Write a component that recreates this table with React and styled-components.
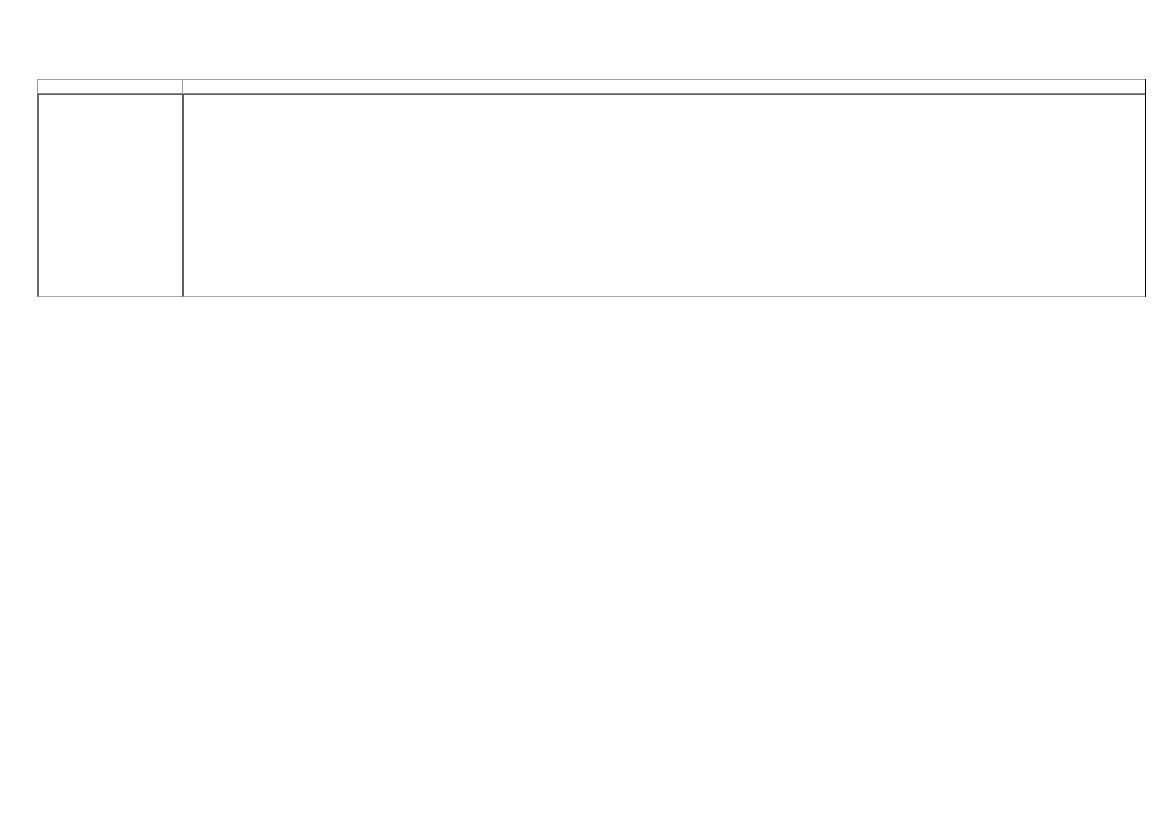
import React from "react";
import styled, { createGlobalStyle } from "styled-components";

const Global = createGlobalStyle`
  html, body { margin: 0; padding: 0; background: #fefefe; }
  body { font-family: "Liberation Sans", Arial, sans-serif; }
`;

const Page = styled.div`
  padding: 79px 23px 0 37px;
  width: 1169px;
  height: 827px;
  box-sizing: border-box;
`;

const Table = styled.div`
  display: grid;
  grid-template-columns: 145px 1fr;
  grid-template-rows: 15px 203px;
  width: 1109px;
  border-right: 1px solid #000;
  box-sizing: border-box;
`;

const HeadCell = styled.div`
  border-top: 1px solid #9c9c9c;
  border-left: 1px solid #9c9c9c;
  border-bottom: 1px solid #8a8a8a;
  box-sizing: border-box;
`;

const BodyCell = styled.div`
  border-top: 1px solid #5e5e5e;
  border-left: 2px solid ${(p) => (p.$first ? "#6a6a6a" : "#5e5e5e")};
  border-bottom: 1px solid #a8a8a8;
  box-sizing: border-box;
`;

export default function App() {
  return (
    <>
      <Global />
      <Page>
        <Table>
          <HeadCell />
          <HeadCell />
          <BodyCell $first />
          <BodyCell />
        </Table>
      </Page>
    </>
  );
}
